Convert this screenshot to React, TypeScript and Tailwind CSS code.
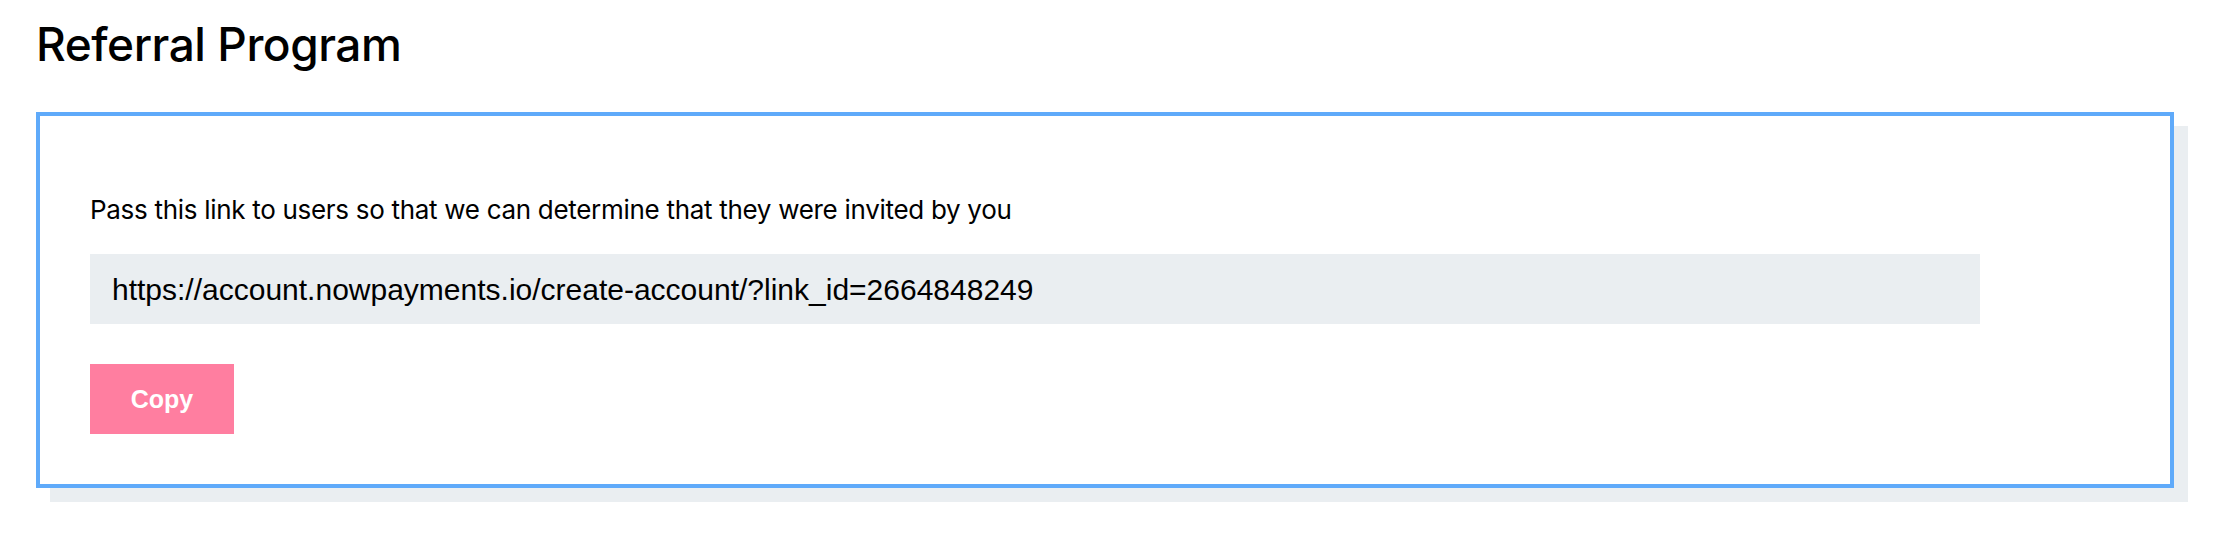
import { useState } from 'react';

const REFERRAL_LINK = 'https://account.nowpayments.io/create-account/?link_id=2664848249';

export default function App() {
  const [copied, setCopied] = useState(false);

  // copy the referral link, fall back silently if clipboard is blocked
  const handleCopy = () => {
    navigator.clipboard?.writeText(REFERRAL_LINK).catch(() => {});
    setCopied(true);
  };

  return (
    <div className="min-h-[550px] bg-white pt-4 pl-[36px] pr-[44px] font-['Inter',sans-serif] text-black">
      <h1 className="text-[46px] leading-[56px] font-medium tracking-[-0.45px]">Referral Program</h1>

      <div className="mt-[40px] border-4 border-[#5faafa] bg-white pt-[74px] pb-[50px] pl-[50px] shadow-[14px_14px_0_#eaeef1]">
        <p className="text-[26px] leading-[40px] tracking-[-0.3px]">
          Pass this link to users so that we can determine that they were invited by you
        </p>

        <div className="mt-[24px] flex h-[70px] w-[1890px] items-center bg-[#eaeef1] px-[22px] pt-[2px]">
          <span className="font-['Liberation_Sans',Arial,sans-serif] text-[30px] leading-[34px]">
            {REFERRAL_LINK}
          </span>
        </div>

        <button
          type="button"
          onClick={handleCopy}
          data-copied={copied}
          className="mt-[40px] flex h-[70px] w-[144px] items-center justify-center bg-[#ff7ea0] font-['Liberation_Sans',Arial,sans-serif] text-[25px] leading-[28px] font-bold text-white"
        >
          Copy
        </button>
      </div>
    </div>
  );
}
